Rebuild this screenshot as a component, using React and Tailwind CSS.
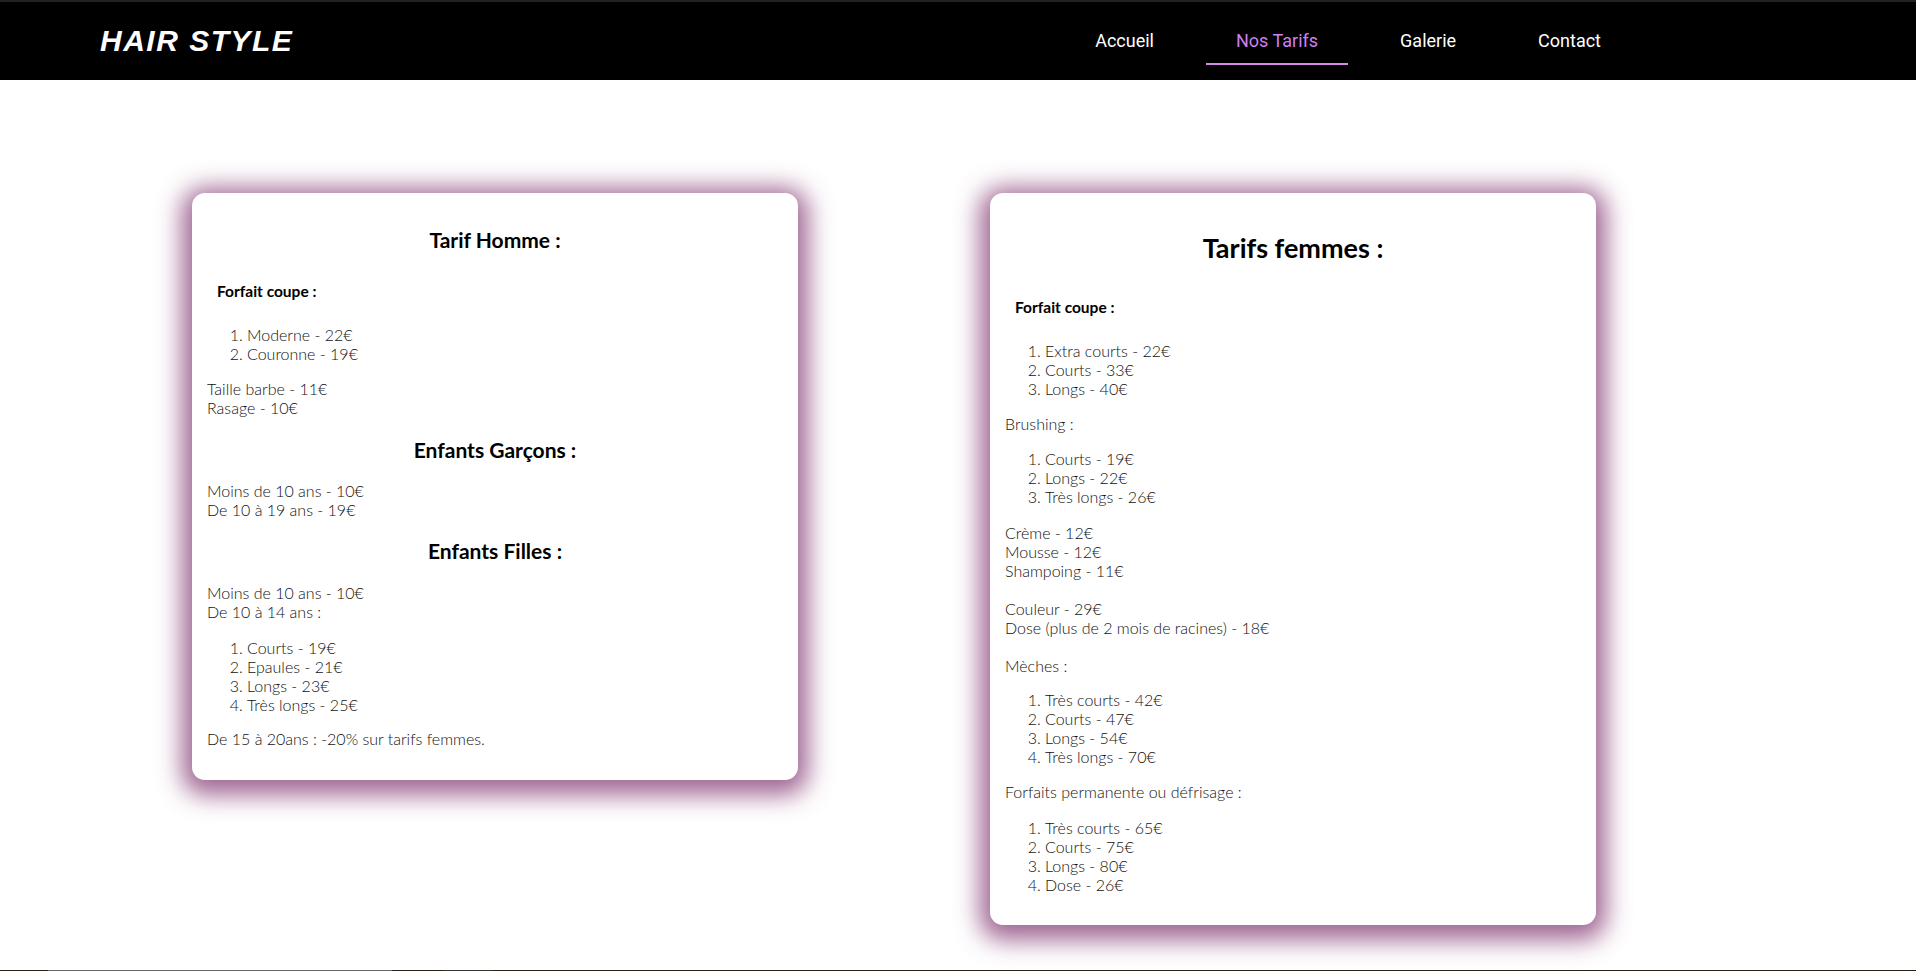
import React from "react";

const body = "font-['Lato','Noto_Sans',sans-serif]";

function Ol({ items, className = "" }) {
  return (
    <ol className={`list-decimal pl-[40px] ${className}`}>
      {items.map((t) => (
        <li key={t} className="leading-[19px]">{t}</li>
      ))}
    </ol>
  );
}

function Lines({ items, className = "" }) {
  return (
    <div className={className}>
      {items.map((t) => (
        <div key={t} className="leading-[19px]">{t}</div>
      ))}
    </div>
  );
}

export default function App() {
  return (
    <div className={`w-[1916px] h-[971px] bg-white flex flex-col ${body}`}>
      <header className="h-[80px] bg-black border-t-[2px] border-[#222] flex items-center pl-[100px] pr-[285px] shrink-0">
        <div className="text-white font-['Liberation_Sans',sans-serif] italic font-bold text-[30px] tracking-[1.5px] leading-none mt-[-1px]">
          HAIR STYLE
        </div>
        <nav className="ml-auto flex gap-[22px] font-['Roboto',sans-serif] text-[18px] mt-[-1px]">
          <a className="relative px-[30px] py-[10px] text-white">Accueil</a>
          <a className="relative px-[30px] py-[10px] text-[#cf7ff0]">
            Nos Tarifs
            <span className="absolute left-0 right-0 bottom-[-1px] h-[2px] bg-[#d98ae9]" />
          </a>
          <a className="relative px-[30px] py-[10px] text-white">Galerie</a>
          <a className="relative px-[30px] py-[10px] text-white">Contact</a>
        </nav>
      </header>

      <main className="flex-1 flex items-start gap-[192px] pl-[192px] pt-[113px]">
        <section className="w-[606px] bg-white rounded-[13px] shadow-[0_5px_25px_10px_rgba(150,85,135,0.9)] px-[15px] pt-[34px] pb-[32px] text-[16px] font-light text-[#111]">
          <h2 className="text-center font-bold text-[21px] leading-[25px] text-black">Tarif Homme :</h2>
          <h5 className="mt-[31px] ml-[10px] font-bold text-[15.5px] leading-[16px] text-black">Forfait coupe :</h5>
          <Ol className="mt-[26px]" items={["Moderne - 22€", "Couronne - 19€"]} />
          <Lines className="mt-[16px]" items={["Taille barbe - 11€", "Rasage - 10€"]} />
          <h3 className="mt-[20px] text-center font-bold text-[21px] leading-[25px] text-black">Enfants Garçons :</h3>
          <Lines className="mt-[19px]" items={["Moins de 10 ans - 10€", "De 10 à 19 ans - 19€"]} />
          <h3 className="mt-[19px] text-center font-bold text-[21px] leading-[25px] text-black">Enfants Filles :</h3>
          <Lines className="mt-[20px]" items={["Moins de 10 ans - 10€", "De 10 à 14 ans :"]} />
          <Ol className="mt-[17px]" items={["Courts - 19€", "Epaules - 21€", "Longs - 23€", "Très longs - 25€"]} />
          <Lines className="mt-[15px]" items={["De 15 à 20ans : -20% sur tarifs femmes."]} />
        </section>

        <section className="w-[606px] bg-white rounded-[13px] shadow-[0_5px_25px_10px_rgba(150,85,135,0.9)] px-[15px] pt-[40px] pb-[31px] text-[16px] font-light text-[#111]">
          <h2 className="text-center font-bold text-[27px] leading-[30px] text-black">Tarifs femmes :</h2>
          <h5 className="mt-[36px] ml-[10px] font-bold text-[15.5px] leading-[16px] text-black">Forfait coupe :</h5>
          <Ol className="mt-[26px]" items={["Extra courts - 22€", "Courts - 33€", "Longs - 40€"]} />
          <Lines className="mt-[16px]" items={["Brushing :"]} />
          <Ol className="mt-[16px]" items={["Courts - 19€", "Longs - 22€", "Très longs - 26€"]} />
          <Lines className="mt-[17px]" items={["Crème - 12€", "Mousse - 12€", "Shampoing - 11€"]} />
          <Lines className="mt-[19px]" items={["Couleur - 29€", "Dose (plus de 2 mois de racines) - 18€"]} />
          <Lines className="mt-[19px]" items={["Mèches :"]} />
          <Ol className="mt-[15px]" items={["Très courts - 42€", "Courts - 47€", "Longs - 54€", "Très longs - 70€"]} />
          <Lines className="mt-[16px]" items={["Forfaits permanente ou défrisage :"]} />
          <Ol className="mt-[17px]" items={["Très courts - 65€", "Courts - 75€", "Longs - 80€", "Dose - 26€"]} />
        </section>
      </main>

      <div className="h-[1px] flex shrink-0">
        <div className="w-[48px] bg-[#2b2117]" />
        <div className="w-[344px] bg-[#666]" />
        <div className="w-[52px] bg-[#2b2117]" />
        <div className="w-[48px] bg-[#3a342e]" />
        <div className="flex-1 bg-[#2b2117]" />
      </div>
    </div>
  );
}
